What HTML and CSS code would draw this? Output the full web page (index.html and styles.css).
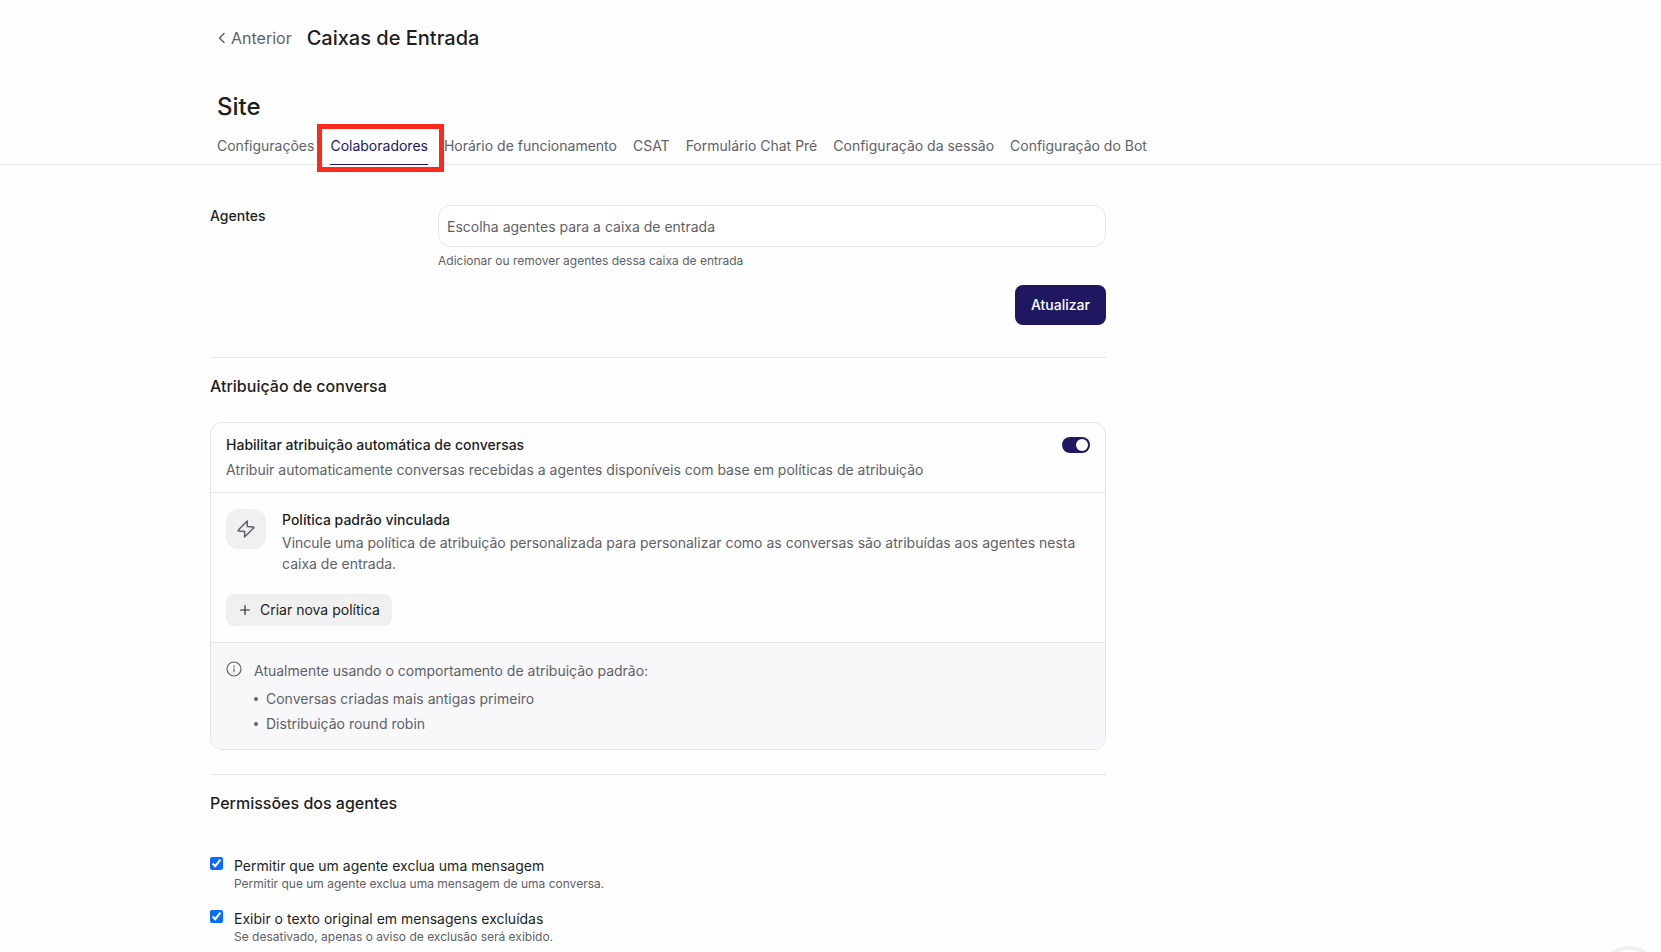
FILE: index.html
```html
<!DOCTYPE html>
<html lang="pt-BR">
<head>
    <meta charset="UTF-8">
    <meta name="viewport" content="width=device-width, initial-scale=1.0">
    <title>Caixas de Entrada</title>
    <link rel="stylesheet" href="styles.css">
</head>
<body>
    <header class="page-header">
        <a href="#" class="back-link">
            <svg width="8" height="12" viewBox="0 0 8 12" fill="none" stroke="currentColor" stroke-width="1.5" stroke-linecap="round" stroke-linejoin="round"><path d="M6 1.5 1.5 6 6 10.5"/></svg>
            Anterior
        </a>
        <h1>Caixas de Entrada</h1>
    </header>

    <div class="inbox-header">
        <h2>Site</h2>
        <nav>
            <ul class="tabs">
                <li><a href="#">Configurações</a></li>
                <li class="active"><a href="#">Colaboradores</a></li>
                <li><a href="#">Horário de funcionamento</a></li>
                <li><a href="#">CSAT</a></li>
                <li><a href="#">Formulário Chat Pré</a></li>
                <li><a href="#">Configuração da sessão</a></li>
                <li><a href="#">Configuração do Bot</a></li>
            </ul>
        </nav>
    </div>

    <main class="container">
        <section class="agents">
            <label for="agents">Agentes</label>
            <div class="agents-field">
                <input type="text" id="agents" placeholder="Escolha agentes para a caixa de entrada">
                <p class="help">Adicionar ou remover agentes dessa caixa de entrada</p>
                <button type="button" class="btn-primary">Atualizar</button>
            </div>
        </section>

        <section class="section">
            <h3>Atribuição de conversa</h3>
            <div class="card">
                <div class="card-header">
                    <div>
                        <label for="auto-assign" class="card-title">Habilitar atribuição automática de conversas</label>
                        <p class="card-text">Atribuir automaticamente conversas recebidas a agentes disponíveis com base em políticas de atribuição</p>
                    </div>
                    <input type="checkbox" role="switch" id="auto-assign" class="toggle" checked>
                </div>

                <div class="card-body">
                    <div class="policy">
                        <div class="policy-icon">
                            <svg width="20" height="20" viewBox="0 0 24 24" fill="none" stroke="currentColor" stroke-width="1.8" stroke-linecap="round" stroke-linejoin="round"><path d="M13.5 2.5 2.8 13.2a.7.7 0 0 0 .5 1.2L10.5 15 10.2 21.5 21.2 10.8a.7.7 0 0 0-.5-1.2L13.5 9Z"/></svg>
                        </div>
                        <div class="policy-info">
                            <h4 class="card-title">Política padrão vinculada</h4>
                            <p class="policy-text">Vincule uma política de atribuição personalizada para personalizar como as conversas são atribuídas aos agentes nesta caixa de entrada.</p>
                        </div>
                    </div>
                    <button type="button" class="btn-secondary">
                        <svg width="10" height="10" viewBox="0 0 10 10" fill="none" stroke="currentColor" stroke-width="1.1" stroke-linecap="round"><path d="M5 .6v8.8M.6 5h8.8"/></svg>
                        Criar nova política
                    </button>
                </div>

                <div class="card-footer">
                    <svg width="16" height="16" viewBox="0 0 16 16" fill="none" stroke="currentColor" stroke-width="1.2" stroke-linecap="round"><circle cx="8" cy="8" r="7"/><path d="M8 7.8v3"/><circle cx="8" cy="5.4" r=".3"/></svg>
                    <div>
                        <p>Atualmente usando o comportamento de atribuição padrão:</p>
                        <ul>
                            <li>Conversas criadas mais antigas primeiro</li>
                            <li>Distribuição round robin</li>
                        </ul>
                    </div>
                </div>
            </div>
        </section>

        <section class="section">
            <h3>Permissões dos agentes</h3>
            <div class="permissions">
                <div class="permission">
                    <input type="checkbox" id="delete-message" checked>
                    <div>
                        <label for="delete-message">Permitir que um agente exclua uma mensagem</label>
                        <p class="help">Permitir que um agente exclua uma mensagem de uma conversa.</p>
                    </div>
                </div>
                <div class="permission">
                    <input type="checkbox" id="show-original" checked>
                    <div>
                        <label for="show-original">Exibir o texto original em mensagens excluídas</label>
                        <p class="help">Se desativado, apenas o aviso de exclusão será exibido.</p>
                    </div>
                </div>
            </div>
        </section>
    </main>

    <button type="button" class="chat-bubble" aria-label="Chat"></button>
</body>
</html>
```

FILE: styles.css
```css
* {
    margin: 0;
    padding: 0;
    box-sizing: border-box;
}

body {
    font-family: Inter, "Liberation Sans", sans-serif;
    font-size: 14px;
    line-height: 20px;
    color: #1c1e21;
    background-color: #fefefe;
    height: 100vh;
    overflow: hidden;
}

a {
    color: inherit;
    text-decoration: none;
}

button,
input {
    font: inherit;
}

svg {
    flex-shrink: 0;
}

/* Header */
.page-header {
    display: flex;
    align-items: center;
    gap: 15px;
    padding: 24px 24px 0 218px;
}

.back-link {
    display: flex;
    align-items: center;
    gap: 5px;
    font-size: 16px;
    color: #5f6166;
}

h1 {
    font-size: 20px;
    font-weight: 450;
    line-height: 28px;
}

.inbox-header {
    padding: 39px 24px 0 217px;
    border-bottom: 1px solid #ebebeb;
}

h2 {
    font-size: 24px;
    font-weight: 450;
    line-height: 32px;
}

.tabs {
    display: flex;
    gap: 16px;
    margin-top: 5px;
    list-style: none;
    color: #5f6166;
    white-space: nowrap;
}

.tabs li {
    position: relative;
}

.tabs a {
    display: block;
    padding: 8px 0;
    margin-bottom: -1px;
    border-bottom: 1px solid transparent;
}

.tabs .active a {
    color: #1f1760;
    border-color: #1f1760;
}

/* Destaque da aba ativa */
.tabs .active::after {
    content: "";
    position: absolute;
    inset: -4px -16px -8px -13px;
    border: 5px solid #fc2a1c;
    pointer-events: none;
}

.container {
    max-width: 1106px;
    padding-left: 210px;
}

/* Agentes */
.agents {
    display: flex;
    padding: 40px 0 32px;
}

.agents > label {
    flex: 0 0 228px;
    padding-top: 1px;
    font-weight: 500;
}

.agents-field {
    flex: 1;
    display: flex;
    flex-direction: column;
}

.agents-field input {
    height: 42px;
    padding: 0 8px;
    border: 1px solid #e6e6e8;
    border-radius: 12px;
    background-color: #fff;
}

.agents-field input::placeholder {
    color: #5f6166;
    opacity: 1;
}

.help {
    font-size: 12px;
    line-height: 16px;
    color: #5f6166;
}

.agents-field .help {
    margin-top: 6px;
}

.btn-primary {
    align-self: flex-end;
    height: 40px;
    margin-top: 16px;
    padding: 0 16px;
    border: 0;
    border-radius: 8px;
    font-weight: 500;
    color: #fff;
    background-color: #1f1760;
}

.section {
    padding: 16px 0 24px;
    border-top: 1px solid #e6e6e8;
}

h3 {
    font-size: 16px;
    font-weight: 450;
    line-height: 24px;
}

/* Card */
.card {
    margin-top: 24px;
    border: 1px solid #e6e6e8;
    border-radius: 12px;
    overflow: hidden;
}

.card-header {
    display: flex;
    justify-content: space-between;
    padding: 12px 15px;
}

.card-title {
    font-size: 14px;
    font-weight: 500;
}

.card-text {
    margin-top: 5px;
    color: #5f6166;
}

.toggle {
    appearance: none;
    width: 28px;
    height: 16px;
    margin-top: 2px;
    padding: 2px;
    border-radius: 8px;
    background-color: #1f1760;
}

.toggle::before {
    content: "";
    display: block;
    width: 12px;
    height: 12px;
    border-radius: 50%;
    background-color: #fff;
}

.toggle:checked::before {
    margin-left: auto;
}

.card-body {
    padding: 16px 15px;
    border-top: 1px solid #e6e6e8;
}

.policy {
    display: flex;
    gap: 16px;
}

.policy-icon {
    display: flex;
    flex: 0 0 40px;
    align-items: center;
    justify-content: center;
    height: 40px;
    border-radius: 12px;
    color: #5f6166;
    background-color: #f0f0f3;
}

.policy-info {
    padding-top: 1px;
}

.policy-text {
    margin-top: 2px;
    line-height: 21px;
    color: #5f6166;
}

.btn-secondary {
    display: flex;
    align-items: center;
    gap: 10px;
    height: 32px;
    margin-top: 20px;
    padding: 0 12px 0 14px;
    border: 0;
    border-radius: 8px;
    color: #1c1e21;
    background-color: #f0f0f0;
}

.card-footer {
    display: flex;
    gap: 12px;
    padding: 18px 15px 15px;
    border-top: 1px solid #e6e6e8;
    color: #5f6166;
    background-color: #f8f8fa;
}

.card-footer ul {
    list-style: none;
}

.card-footer li {
    display: flex;
    align-items: center;
    gap: 8px;
    margin-top: 8px;
}

.card-footer li + li {
    margin-top: 5px;
}

.card-footer li::before {
    content: "";
    width: 4px;
    height: 4px;
    border-radius: 50%;
    background-color: #5f6166;
}

/* Permissões */
.permissions {
    display: flex;
    flex-direction: column;
    gap: 17px;
    margin-top: 41px;
}

.permission {
    display: flex;
    gap: 11px;
}

.permission input {
    width: 13px;
    height: 13px;
    margin-top: 1px;
    accent-color: #0a6cff;
}

.permission label {
    display: block;
}

.chat-bubble {
    position: fixed;
    right: 0;
    bottom: -58px;
    width: 64px;
    height: 64px;
    border: 4px solid #efefef;
    border-radius: 50%;
    background-color: #fff;
}
```
